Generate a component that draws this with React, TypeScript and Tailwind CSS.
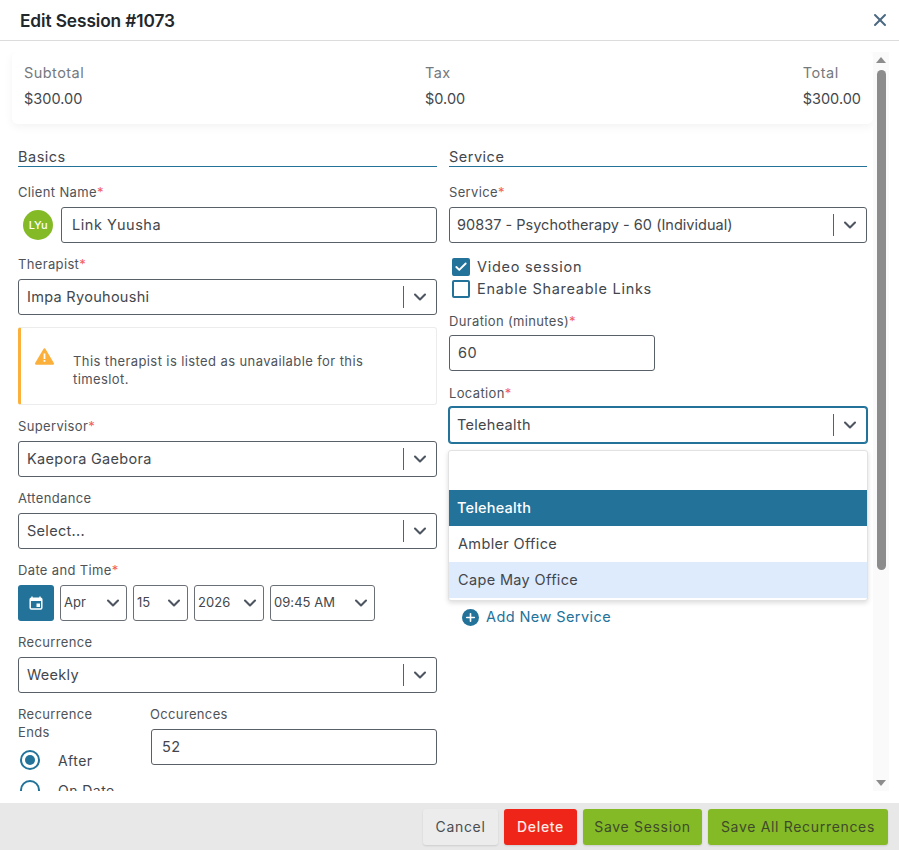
import React from "react";
import { X, ChevronDown, Check, Plus } from "lucide-react";

const Label = ({ text, req, tight }: { text: string; req?: boolean; tight?: boolean }) => (
  <div className={"h-[18px] text-[13px] leading-[18px] tracking-[0.35px] text-[#4f5358] whitespace-nowrap " + (tight ? "mb-[5px]" : "mb-[6px]")}>
    {text}
    {req && <span className="text-[#f25c5c]">*</span>}
  </div>
);

const Chev = () => <ChevronDown size={20} strokeWidth={2.5} className="text-[#4c5560]" />;

const Select = ({ value, focus, right, narrow }: { value: string; focus?: boolean; right?: boolean; narrow?: boolean }) => (
  <div
    className={
      "h-9 flex items-center bg-white rounded-[3px] border " +
      (focus ? "border-[#22729a] ring-1 ring-[#22729a] " : "border-[#5a6068] ") +
      (right ? "pl-[7px]" : "pl-2")
    }
  >
    <div className={"flex-1 text-[14.5px] text-[#43474c] whitespace-nowrap " + (narrow ? "tracking-[0.02px]" : "tracking-[0.3px]")}>{value}</div>
    <div className="w-px h-[22px] bg-[#5a6068]" />
    <div className="w-8 flex justify-center"><Chev /></div>
  </div>
);

const Field = ({ label, req, value }: { label: string; req?: boolean; value: string }) => (
  <div className="mb-3">
    <Label text={label} req={req} />
    <Select value={value} />
  </div>
);

const Native = ({ value, w }: { value: string; w: string }) => (
  <div className={"h-9 flex items-center justify-between pl-[3px] pr-[3px] bg-white border border-[#6b7076] rounded-[3px] " + w}>
    <span className="text-[13px] tracking-[0.05px] text-[#43474c] whitespace-nowrap">{value}</span>
    <Chev />
  </div>
);

const Input = ({ value, cls }: { value: string; cls?: string }) => (
  <div className={"h-9 flex items-center bg-white border border-[#5a6068] rounded-[3px] text-[14.5px] tracking-[0.55px] text-[#43474c] " + (cls || "")}>
    {value}
  </div>
);

const Section = ({ title }: { title: string }) => (
  <div className="h-5 mb-4 pt-px border-b border-[#22729a] text-[14.5px] leading-[18px] tracking-[0.5px] text-[#43474c]">{title}</div>
);

const Check2 = ({ on, label }: { on?: boolean; label: string }) => (
  <div className="h-[22px] flex items-center">
    <div className={"ml-[3px] w-[18px] h-[18px] rounded-[2px] border-2 border-[#22729a] flex items-center justify-center " + (on ? "bg-[#22729a]" : "bg-white")}>
      {on && <Check size={14} strokeWidth={3.2} className="text-white" />}
    </div>
    <span className="ml-[7px] text-[14.5px] tracking-[0.72px] text-[#43474c]">{label}</span>
  </div>
);

const Radio = ({ on, label }: { on?: boolean; label: string }) => (
  <div className="h-[30px] flex items-center">
    <div className="ml-[2px] w-5 h-5 rounded-full border-2 border-[#22729a] bg-white flex items-center justify-center">
      {on && <div className="w-[10px] h-[10px] rounded-full bg-[#22729a]" />}
    </div>
    <span className="ml-[18px] text-[14px] tracking-[0.45px] text-[#43474c] whitespace-nowrap">{label}</span>
  </div>
);

const Btn = ({ text, cls }: { text: string; cls: string }) => (
  <button className={"h-9 rounded-[3px] text-[14px] tracking-[0.68px] shadow-[0_1px_2px_rgba(0,0,0,0.12)] " + cls}>{text}</button>
);

export default function App() {
  return (
    <div
      className="w-[899px] h-[850px] bg-white flex flex-col overflow-hidden"
      style={{ fontFamily: "Inter, 'Noto Sans', sans-serif" }}
    >
      <header className="h-[41px] shrink-0 border-b border-[#dcdcdc] flex items-center justify-between pl-5 pr-[9px]">
        <h1 className="pt-[2px] text-[17.3px] font-semibold text-[#22272b] tracking-[-0.1px]">Edit Session #1073</h1>
        <X size={20} strokeWidth={2.4} className="text-[#4b6a82]" />
      </header>

      <div className="h-[762px] shrink-0 flex pt-[11px] pb-[12px]">
        <div className="w-[873px] shrink-0 overflow-hidden pl-3">
          <div className="w-[861px] h-[72px] rounded-[6px] bg-white shadow-[0_3px_10px_rgba(0,0,0,0.05)] px-3 pt-3 flex justify-between">
            <div className="w-[401px]">
              <div className="text-[14.5px] leading-[18px] tracking-[0.45px] text-[#75797d]">Subtotal</div>
              <div className="mt-2 text-[14.5px] leading-[18px] text-[#43474c]">$300.00</div>
            </div>
            <div className="flex-1">
              <div className="text-[14.5px] leading-[18px] tracking-[0.45px] text-[#75797d]">Tax</div>
              <div className="mt-2 text-[14.5px] leading-[18px] text-[#43474c]">$0.00</div>
            </div>
            <div>
              <div className="text-[14.5px] leading-[18px] tracking-[0.55px] text-[#75797d]">Total</div>
              <div className="mt-2 text-[14.5px] leading-[18px] text-[#43474c]">$300.00</div>
            </div>
          </div>

          <div className="mt-[23px] pl-[6px] flex gap-3">
            <div className="w-[419px] shrink-0">
              <Section title="Basics" />
              <div className="mb-3">
                <Label text="Client Name" req />
                <div className="flex items-center">
                  <div className="ml-[5px] w-[30px] h-[30px] rounded-full bg-[#85ba27] text-white text-[11px] font-medium tracking-[-0.3px] flex items-center justify-center">LYu</div>
                  <Input value="Link Yuusha" cls="ml-2 flex-1 pl-[10px]" />
                </div>
              </div>
              <Field label="Therapist" req value="Impa Ryouhoushi" />

              <div className="h-[78px] mb-3 flex rounded-[3px] border border-[#ececec] border-l-[3px] border-l-[#fbb03b]">
                <svg width="19" height="17" viewBox="0 0 19 17" className="ml-[14px] mt-[20px] shrink-0">
                  <path d="M9.5 1.5 L17.8 15.5 H1.2 Z" fill="#fbb03b" stroke="#fbb03b" strokeWidth="2.4" strokeLinejoin="round" />
                  <rect x="8.6" y="5.5" width="1.8" height="5.5" fill="#fff" />
                  <rect x="8.6" y="12" width="1.8" height="1.8" fill="#fff" />
                </svg>
                <div className="ml-[19px] mt-[24px] w-[320px] text-[13px] leading-[18px] tracking-[0.4px] text-[#4f5358]">
                  This therapist is listed as unavailable for this timeslot.
                </div>
              </div>

              <Field label="Supervisor" req value="Kaepora Gaebora" />
              <Field label="Attendance" value="Select..." />

              <div className="mb-3">
                <Label text="Date and Time" req />
                <div className="flex gap-[6px]">
                  <div className="w-9 h-9 rounded-[3px] bg-[#22729a] flex items-center justify-center">
                    <svg width="14" height="14" viewBox="0 0 14 14" fill="none">
                      <path d="M3 0.5v2M11 0.5v2" stroke="#fff" strokeWidth="1.4" />
                      <rect x="1.2" y="2.2" width="11.6" height="10.8" rx="1.2" stroke="#fff" strokeWidth="1.5" />
                      <rect x="1.2" y="2.2" width="11.6" height="2.8" fill="#fff" />
                      <rect x="7.5" y="7.5" width="3.5" height="3.5" fill="#fff" />
                    </svg>
                  </div>
                  <Native value="Apr" w="w-[67px]" />
                  <Native value="15" w="w-[55px]" />
                  <Native value="2026" w="w-[70px]" />
                  <Native value="09:45 AM" w="w-[105px]" />
                </div>
              </div>

              <Field label="Recurrence" value="Weekly" />

              <div className="flex">
                <div className="w-[133px] shrink-0">
                  <div className="text-[13px] leading-[18px] tracking-[0.35px] text-[#4f5358]">Recurrence<br />Ends</div>
                  <div className="mt-[4px]"><Radio on label="After" /></div>
                  <Radio label="On Date" />
                </div>
                <div className="flex-1">
                  <div className="-ml-px"><Label text="Occurences" /></div>
                  <Input value="52" cls="pl-[10px]" />
                </div>
              </div>
            </div>

            <div className="w-[418px] shrink-0">
              <Section title="Service" />
              <Label text="Service" req />
              <Select value="90837 - Psychotherapy - 60 (Individual)" right narrow />
              <div className="mt-[13px] mb-3">
                <Check2 on label="Video session" />
                <Check2 label="Enable Shareable Links" />
              </div>
              <div className="mb-[13px]">
                <Label text="Duration (minutes)" req tight />
                <Input value="60" cls="w-[206px] pl-2" />
              </div>
              <Label text="Location" req tight />
              <div className="relative">
                <Select value="Telehealth" focus right />
                <div className="absolute z-10 -left-px -right-px top-[43px] h-[151px] bg-white rounded-[3px] border border-[#e2e2e2] shadow-[0_2px_5px_rgba(0,0,0,0.14)] pt-[39px]">
                  <div className="h-9 flex items-center pl-2 bg-[#22729a] text-white text-[14.5px] font-medium tracking-[0.2px]">Telehealth</div>
                  <div className="h-9 flex items-center pl-[9px] text-[14.5px] tracking-[0.35px] text-[#43474c]">Ambler Office</div>
                  <div className="h-9 flex items-center pl-[9px] bg-[#deebfd] text-[14.5px] tracking-[0.35px] text-[#43474c]">Cape May Office</div>
                </div>
              </div>
              <div className="mt-[164px] ml-[13px] h-5 flex items-center">
                <div className="w-[17px] h-[17px] rounded-full bg-[#22729a] flex items-center justify-center">
                  <Plus size={13} strokeWidth={3} className="text-white" />
                </div>
                <span className="ml-[7px] text-[14.5px] tracking-[0.42px] text-[#22729a]">Add New Service</span>
              </div>
            </div>
          </div>
        </div>

        <div className="w-[16px] shrink-0 bg-[#fafafa] flex flex-col items-center">
          <div className="h-[18px] flex items-center justify-center">
            <div className="w-0 h-0 mt-[-2px] border-l-[5px] border-r-[5px] border-b-[6px] border-l-transparent border-r-transparent border-b-[#8c8c8c]" />
          </div>
          <div className="w-[9px] h-[500px] rounded-[5px] bg-[#8c8c8c]" />
          <div className="flex-1" />
          <div className="h-[18px] flex items-center justify-center">
            <div className="w-0 h-0 mt-[2px] border-l-[5px] border-r-[5px] border-t-[6px] border-l-transparent border-r-transparent border-t-[#8c8c8c]" />
          </div>
        </div>
      </div>

      <footer className="flex-1 bg-[#e8e8e8] flex items-center justify-end gap-[6px] pr-[11px]">
        <Btn text="Cancel" cls="w-[75px] bg-[#ececec] text-[#4a4e52]" />
        <Btn text="Delete" cls="w-[73px] bg-[#ee2518] text-[#ffe9e6] font-medium" />
        <Btn text="Save Session" cls="w-[119px] bg-[#85ba27] text-[#3e4a2a]" />
        <Btn text="Save All Recurrences" cls="w-[180px] bg-[#85ba27] text-[#3e4a2a]" />
      </footer>
    </div>
  );
}
